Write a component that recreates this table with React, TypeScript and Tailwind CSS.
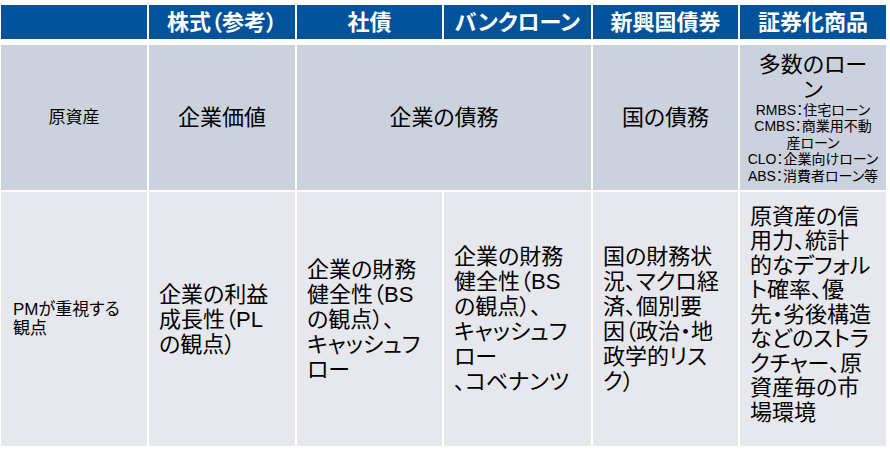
import React from "react";

const F = "font-['Liberation_Sans','Noto_Sans_CJK_JP',sans-serif] [font-feature-settings:'palt']";

function Lines({ lines, cls }: { lines: string[]; cls: string }) {
  return (
    <div className={cls}>
      {lines.map((l, i) => (
        <div key={i} className="whitespace-nowrap">
          {l}
        </div>
      ))}
    </div>
  );
}

export default function App() {
  const head = "bg-[#00529a] text-white font-bold text-[22px] flex items-center justify-center h-[34px] self-start";
  const r2 = "bg-[#cbd2de] flex items-center justify-center text-black";
  const r3 = "bg-[#e7e8ee] flex items-center pl-[10px] text-black";
  const big = "text-[22px] leading-[25px]";
  return (
    <div className={`bg-white w-[890px] h-[454px] pt-[5px] pl-[1px] ${F}`}>
      <div className="grid grid-cols-[146px_146px_145px_147px_145px_146px] grid-rows-[38px_145px_254px] gap-x-[2px] gap-y-[2px] w-[885px]">
        <div className={head}></div>
        <div className={head}>株式（参考）</div>
        <div className={head}>社債</div>
        <div className={head}>バンクローン</div>
        <div className={head}>新興国債券</div>
        <div className={head}>証券化商品</div>

        <div className={`${r2} text-[17px]`}>原資産</div>
        <div className={`${r2} text-[22px]`}>企業価値</div>
        <div className={`${r2} col-span-2 text-[22px]`}>企業の債務</div>
        <div className={`${r2} text-[22px]`}>国の債務</div>
        <div className={`${r2} flex-col`}>
          <Lines lines={["多数のロー", "ン"]} cls="text-[22px] leading-[25px] text-center mt-[1px]" />
          <Lines
            lines={["RMBS：住宅ローン", "CMBS：商業用不動", "産ローン", "CLO：企業向けローン", "ABS：消費者ローン等"]}
            cls="text-[14px] leading-[16.6px] text-center"
          />
        </div>

        <div className={`${r3} text-[17px] leading-[19px] pl-[12px]`}>
          <Lines lines={["PMが重視する", "観点"]} cls="" />
        </div>
        <div className={r3}>
          <Lines lines={["企業の利益", "成長性（PL", "の観点）"]} cls={big} />
        </div>
        <div className={r3}>
          <Lines lines={["企業の財務", "健全性（BS", "の観点）、", "キャッシュフ", "ロー"]} cls={big} />
        </div>
        <div className={r3}>
          <Lines lines={["企業の財務", "健全性（BS", "の観点）、", "キャッシュフ", "ロー", "、コベナンツ"]} cls={big} />
        </div>
        <div className={r3}>
          <Lines lines={["国の財務状", "況、マクロ経", "済、個別要", "因（政治・地", "政学的リス", "ク）"]} cls={big} />
        </div>
        <div className={r3}>
          <Lines
            lines={["原資産の信", "用力、統計", "的なデフォル", "ト確率、優", "先・劣後構造", "などのストラ", "クチャー、原", "資産毎の市", "場環境"]}
            cls="text-[22px] leading-[24.5px] -mt-[8px]"
          />
        </div>
      </div>
    </div>
  );
}
